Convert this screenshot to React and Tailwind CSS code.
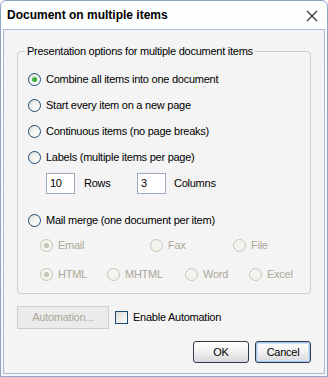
import React from 'react';

const font = { fontFamily: '"Liberation Sans", Arial, sans-serif' };

function Radio({ checked = false, disabled = false }) {
  if (disabled) {
    return (
      <span className="relative flex h-[13px] w-[13px] shrink-0 items-center justify-center rounded-full border border-[#c6c4b8] bg-[#f4f3ee]">
        {checked && <span className="h-[5px] w-[5px] rounded-full bg-[#c6c4b8]" />}
      </span>
    );
  }
  return (
    <span className="relative flex h-[13px] w-[13px] shrink-0 items-center justify-center rounded-full border border-[#1c4a73] bg-gradient-to-br from-[#dcdcd6] via-[#f4f4f2] to-white">
      {checked && <span className="h-[5px] w-[5px] rounded-full bg-gradient-to-br from-[#56d456] to-[#1e8f1e]" />}
    </span>
  );
}

function Option({ label, checked, disabled, className = '' }) {
  return (
    <div className={`flex items-center ${className}`}>
      <Radio checked={checked} disabled={disabled} />
      <span className={`ml-[5px] ${disabled ? 'text-[#aca899]' : 'text-black'}`}>{label}</span>
    </div>
  );
}

function Button({ children, isDefault }) {
  return (
    <button
      className={`flex h-[22px] w-[56px] items-center justify-center rounded-[3px] border border-[#303a4a] bg-gradient-to-b from-white via-[#f0f0f0] to-[#d8d8dc] text-black ${
        isDefault ? 'shadow-[inset_0_0_0_1px_#a8c4ee,inset_0_0_0_2px_#cfe0f6]' : ''
      }`}
    >
      {children}
    </button>
  );
}

export default function App() {
  return (
    <div
      className="flex h-[377px] w-[328px] flex-col rounded-t-[6px] border border-[#8ea4c4] bg-gradient-to-b from-white to-[#f4f6f9] text-[11px] leading-[13px] tracking-[-0.25px]"
      style={font}
    >
      {/* title bar */}
      <div className="flex h-[28px] shrink-0 items-center justify-between pl-[6px] pr-[9px]">
        <span className="text-[12px] font-bold tracking-normal text-black">Document on multiple items</span>
        <svg width="12" height="12" viewBox="0 0 12 12" className="mt-[2px]">
          <path d="M1 1 L11 11 M11 1 L1 11" stroke="#4a4a4a" strokeWidth="1.5" />
        </svg>
      </div>

      {/* client area */}
      <div className="mx-[2px] mb-[2px] flex flex-1 flex-col border border-[#a9bad3] bg-[#f4f4f4] px-[13px] pt-[15px]">
        <fieldset className="h-[249px] rounded-[4px] border border-[#cfcfc4] pl-[10px]">
          <legend className="ml-[-3px] px-[2px] text-black">Presentation options for multiple document items</legend>
          <div className="flex flex-col pt-[8px]">
            <Option className="h-[26px]" label="Combine all items into one document" checked />
            <Option className="h-[26px]" label="Start every item on a new page" />
            <Option className="h-[26px]" label="Continuous items (no page breaks)" />
            <Option className="h-[26px]" label="Labels (multiple items per page)" />
            <div className="flex h-[26px] items-center pl-[18px]">
              <div className="flex h-[21px] w-[29px] items-center border border-[#9aabbf] bg-white pl-[3px]">10</div>
              <span className="ml-[9px] w-[53px]">Rows</span>
              <div className="flex h-[21px] w-[29px] items-center border border-[#9aabbf] bg-white pl-[3px]">3</div>
              <span className="ml-[8px]">Columns</span>
            </div>
            <Option className="mt-[11px] h-[26px]" label="Mail merge (one document per item)" />
            <div className="flex h-[25px] items-center pl-[12px]">
              <Option className="w-[110px]" label="Email" checked disabled />
              <Option className="w-[83px]" label="Fax" disabled />
              <Option label="File" disabled />
            </div>
            <div className="mt-[4px] flex h-[25px] items-center pl-[12px]">
              <Option className="w-[67px]" label="HTML" checked disabled />
              <Option className="w-[78px]" label="MHTML" disabled />
              <Option className="w-[64px]" label="Word" disabled />
              <Option label="Excel" disabled />
            </div>
          </div>
        </fieldset>

        <div className="mt-[12px] flex items-center">
          <div className="flex h-[23px] w-[92px] items-center justify-center border border-[#cfcfc8] bg-[#ebebeb] text-[#aca899]">
            Automation...
          </div>
          <span className="ml-[6px] h-[13px] w-[13px] border border-[#1c4a73] bg-gradient-to-br from-[#dcdcd6] to-white" />
          <span className="ml-[5px] text-black">Enable Automation</span>
        </div>

        <div className="mt-[12px] flex justify-end gap-[6px]">
          <Button>OK</Button>
          <Button isDefault>Cancel</Button>
        </div>
      </div>
    </div>
  );
}
